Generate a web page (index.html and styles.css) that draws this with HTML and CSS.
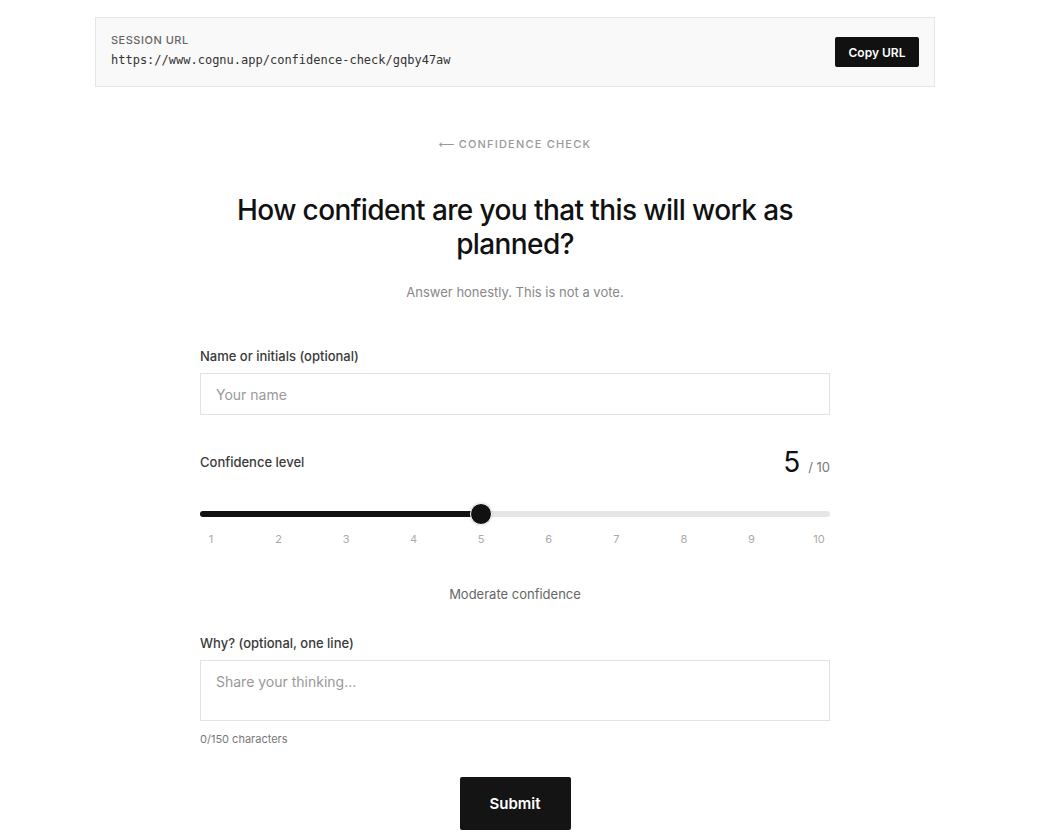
FILE: index.html
```html
<!DOCTYPE html>
<html>
  <head>
    <meta charset="UTF-8" />
    <title>Confidence Check</title>
    <link rel="stylesheet" href="styles.css">
  </head>
  <body>
    <div class="page">
      <div class="session-box">
        <div class="session-info">
          <div class="session-label">Session URL</div>
          <div class="session-url">https://www.cognu.app/confidence-check/gqby47aw</div>
        </div>
        <button type="button" class="copyBtn">Copy URL</button>
      </div>

      <div class="back-link"><span class="back-arrow">&#10229;</span> Confidence Check</div>

      <h1>How confident are you that this will work as planned?</h1>
      <p class="subtitle">Answer honestly. This is not a vote.</p>

      <form class="check-form">
        <label class="field-label" for="name">Name or initials (optional)</label>
        <input type="text" id="name" class="text-input" placeholder="Your name" />

        <div class="level-row">
          <span class="field-label">Confidence level</span>
          <span class="level-value">5<span class="level-max">/ 10</span></span>
        </div>

        <div class="slider">
          <div class="slider-track">
            <div class="slider-fill" style="width: 281px"></div>
          </div>
          <div class="slider-thumb" style="left: 270px"></div>
        </div>
        <div class="slider-ticks">
          <span>1</span><span>2</span><span>3</span><span>4</span><span>5</span>
          <span>6</span><span>7</span><span>8</span><span>9</span><span>10</span>
        </div>

        <p class="level-text">Moderate confidence</p>

        <label class="field-label" for="why">Why? (optional, one line)</label>
        <textarea id="why" class="text-area" placeholder="Share your thinking..."></textarea>
        <div class="char-count">0/150 characters</div>

        <div class="submit-row">
          <button type="submit" class="submitBtn">Submit</button>
        </div>
      </form>
    </div>
  </body>
</html>
```

FILE: styles.css
```css
body {
  font-family: Inter, "Noto Sans", Arial, sans-serif;
  background-color: #ffffff;
  color: #111;
  margin: 0;
  padding: 0;
}

.page {
  width: 1030px;
  padding-top: 17px;
}

.session-box {
  width: 840px;
  box-sizing: border-box;
  margin: 0 auto;
  display: flex;
  align-items: center;
  justify-content: space-between;
  background-color: #f9f9f9;
  border: 1px solid #e6e6e6;
  padding: 15px 15px 19px 15px;
}

.session-label {
  font-size: 11px;
  line-height: 14px;
  letter-spacing: 0.5px;
  text-transform: uppercase;
  color: #666;
  font-weight: 500;
}

.session-url {
  margin-top: 6px;
  font-family: "DejaVu Sans Mono", "Liberation Mono", monospace;
  font-size: 12px;
  line-height: 14px;
  color: #333;
}

.copyBtn {
  margin-top: 4px;
  background-color: #111;
  color: #fff;
  border: none;
  border-radius: 2px;
  width: 84px;
  height: 30px;
  font-family: Inter, Arial, sans-serif;
  font-size: 12px;
  font-weight: 600;
  cursor: pointer;
}

.back-link {
  margin-top: 50px;
  height: 14px;
  text-align: center;
  font-size: 11px;
  line-height: 14px;
  letter-spacing: 1.2px;
  text-transform: uppercase;
  color: #999;
  font-weight: 500;
}

.back-arrow {
  font-family: "DejaVu Sans", sans-serif;
  letter-spacing: 0;
  line-height: 1;
}

h1 {
  width: 580px;
  margin: 42px auto 0 auto;
  text-align: center;
  font-size: 28px;
  line-height: 34px;
  font-weight: 500;
  letter-spacing: -0.6px;
  color: #111;
}

.subtitle {
  margin: 22px 0 0 0;
  text-align: center;
  font-size: 13px;
  line-height: 18px;
  color: #888;
}

.check-form {
  width: 630px;
  margin: 46px auto 0 auto;
}

.field-label {
  display: block;
  font-size: 13px;
  line-height: 18px;
  font-weight: 500;
  color: #3a3a3a;
}

.text-input,
.text-area {
  display: block;
  width: 100%;
  box-sizing: border-box;
  margin-top: 8px;
  border: 1px solid #e3e3e3;
  border-radius: 0;
  padding: 0 15px;
  font-family: Inter, Arial, sans-serif;
  font-size: 14px;
  color: #111;
  background: #fff;
}

.text-input {
  height: 42px;
}

.text-area {
  height: 61px;
  padding-top: 12px;
  resize: none;
}

.text-input::placeholder,
.text-area::placeholder {
  color: #999;
}

.level-row {
  margin-top: 30px;
  height: 34px;
  display: flex;
  align-items: center;
  justify-content: space-between;
}

.level-value {
  margin-top: 4px;
  font-size: 28px;
  line-height: 34px;
  color: #111;
}

.level-max {
  margin-left: 8px;
  font-size: 13px;
  color: #777;
}

.slider {
  position: relative;
  margin-top: 24px;
  height: 22px;
  display: flex;
  align-items: center;
}

.slider-track {
  width: 100%;
  height: 6px;
  border-radius: 3px;
  background-color: #e6e6e6;
  overflow: hidden;
}

.slider-fill {
  height: 100%;
  background-color: #111;
}

.slider-thumb {
  position: absolute;
  top: 0;
  width: 20px;
  height: 20px;
  border-radius: 50%;
  background-color: #111;
  border: 1px solid #fff;
  box-shadow: 0 0 2px rgba(0, 0, 0, 0.2);
}

.slider-ticks {
  margin-top: 7px;
  padding: 0 11px;
  display: flex;
  justify-content: space-between;
  font-size: 11px;
  line-height: 14px;
  color: #aaa;
}

.slider-ticks span {
  width: 0;
  display: flex;
  justify-content: center;
}

.level-text {
  margin: 39px 0 31px 0;
  text-align: center;
  font-size: 13px;
  line-height: 18px;
  color: #666;
}

.char-count {
  margin-top: 11px;
  font-size: 11px;
  line-height: 14px;
  color: #777;
}

.submit-row {
  display: flex;
  justify-content: center;
  margin-top: 31px;
}

.submitBtn {
  width: 111px;
  height: 53px;
  background-color: #141414;
  color: #fff;
  border: none;
  border-radius: 2px;
  font-family: Inter, Arial, sans-serif;
  font-size: 15px;
  font-weight: 600;
  cursor: pointer;
}
```
